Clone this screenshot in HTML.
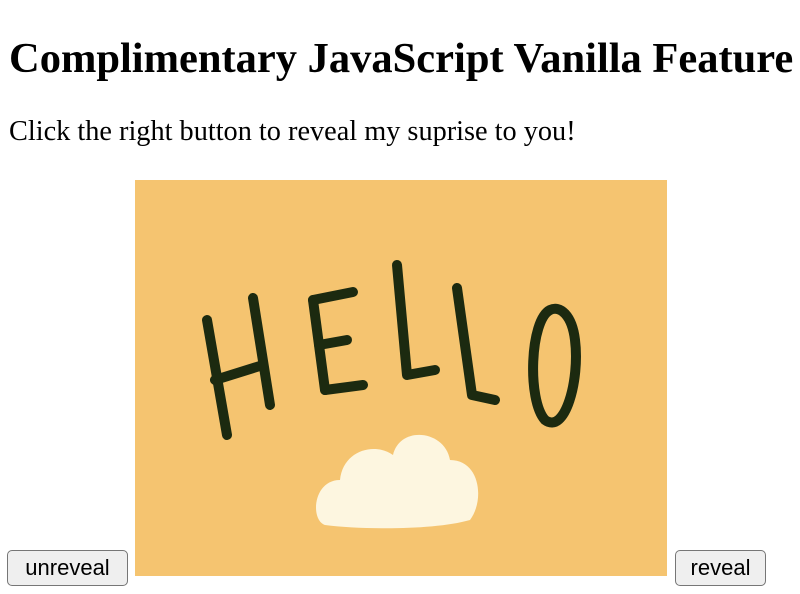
<!DOCTYPE html>
<html><head><style>
body{margin:0;width:800px;height:594px;background:#fff;position:relative;overflow:hidden;font-family:"Liberation Serif",serif;}
h1{position:absolute;left:9px;top:30px;margin:0;font-size:42.5px;line-height:58px;font-weight:bold;white-space:nowrap}
p{position:absolute;left:9px;top:113px;margin:0;font-size:28.3px;line-height:38px;white-space:nowrap}
button{position:absolute;top:550px;height:36px;font-family:"Liberation Sans",sans-serif;font-size:22px;background:#efefef;border:1.5px solid #767676;border-radius:5px;padding:0;color:#000}
</style></head><body>
<h1>Complimentary JavaScript Vanilla Feature</h1>
<p>Click the right button to reveal my suprise to you!</p>
<button style="left:7px;width:121px">unreveal</button>
<button style="left:675px;width:91px">reveal</button>
<svg style="position:absolute;left:135px;top:180px" width="532" height="396" viewBox="0 0 532 396">
<rect width="532" height="396" fill="#f5c470"/>
<g fill="none" stroke="#1c2a10" stroke-width="10" stroke-linecap="round" stroke-linejoin="round">
<path d="M72 140 L92 255"/><path d="M80 200 L128 185"/><path d="M118 118 L135 225"/>
<path d="M178 120 L190 210"/><path d="M178 120 L218 112"/><path d="M184 165 L212 160"/><path d="M190 210 L228 205"/>
<path d="M262 85 L272 195 L300 190"/>
<path d="M322 108 L337 215 L360 220"/>
<path d="M415 130 C395 140 392 220 410 240 C430 255 445 200 440 160 C437 135 425 125 415 130Z"/>
</g>
<path d="M190 345 C175 340 178 300 205 300 C208 270 240 262 258 275 C265 245 310 250 315 280 C345 280 350 320 335 340 C300 350 230 350 190 345Z" fill="#fdf6e0"/>
</svg>
</body></html>
